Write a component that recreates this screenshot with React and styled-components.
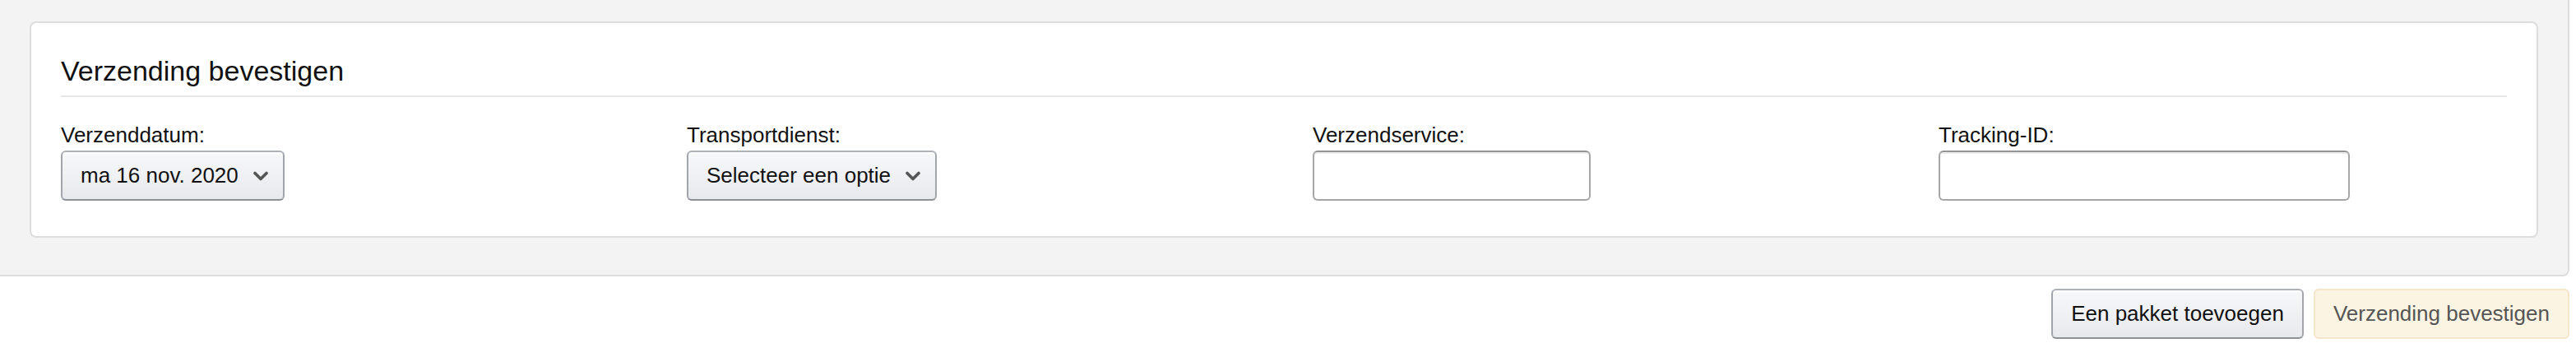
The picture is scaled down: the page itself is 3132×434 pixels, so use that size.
import styled, { createGlobalStyle } from "styled-components";

const GlobalStyle = createGlobalStyle`
  html, body {
    margin: 0;
    padding: 0;
    background: #ffffff;
  }
  body {
    font-family: "Liberation Sans", Arial, sans-serif;
    color: #111111;
  }
  * {
    box-sizing: border-box;
  }
`;

const Page = styled.div`
  width: 3124px;
`;

const Panel = styled.section`
  background: #f3f3f3;
  border-right: 2px solid #dddddd;
  border-bottom: 2px solid #dddddd;
  border-bottom-right-radius: 8px;
  padding: 26px 36px 45px 36px;
`;

const Card = styled.div`
  background: #ffffff;
  border: 2px solid #dddddd;
  border-radius: 8px;
  padding: 34px 36px 43px 36px;
`;

const Heading = styled.h2`
  margin: 0;
  font-size: 34px;
  line-height: 48px;
  font-weight: 400;
  color: #111111;
  padding-bottom: 6px;
  border-bottom: 2px solid #e7e7e7;
`;

const Fields = styled.div`
  display: grid;
  grid-template-columns: repeat(4, 1fr);
  column-gap: 70px;
  margin-top: 27px;
`;

const Field = styled.div`
  display: flex;
  flex-direction: column;
  align-items: flex-start;
`;

const Label = styled.label`
  font-size: 26px;
  line-height: 38px;
  color: #111111;
`;

const Select = styled.button`
  display: flex;
  align-items: center;
  gap: 18px;
  height: 61px;
  padding: 0 18px 0 22px;
  font-family: inherit;
  font-size: 26px;
  color: #111111;
  background: linear-gradient(to bottom, #f7f8fa, #e7e9ec);
  border: 2px solid #adb1b8;
  border-color: #adb1b8 #a2a6ac #8d9096;
  border-radius: 6px;
  box-shadow: inset 0 2px 0 rgba(255, 255, 255, 0.6);
`;

const TextInput = styled.input`
  width: ${(props) => props.$width}px;
  height: 61px;
  padding: 0 14px;
  font-family: inherit;
  font-size: 26px;
  background: #ffffff;
  border: 2px solid #a6a6a6;
  border-top-color: #949494;
  border-radius: 6px;
  box-shadow: inset 0 2px 0 rgba(0, 0, 0, 0.07);
  outline: none;
`;

const Actions = styled.div`
  display: flex;
  justify-content: flex-end;
  gap: 12px;
  margin-top: 15px;
`;

const ActionButton = styled.button`
  height: 61px;
  padding: 0 22px;
  font-family: inherit;
  font-size: 26px;
  border-radius: 6px;
  border: 2px solid;
  color: ${(props) => (props.$disabled ? "#555555" : "#111111")};
  background: ${(props) =>
    props.$disabled
      ? "#fcf4e3"
      : "linear-gradient(to bottom, #f7f8fa, #e7e9ec)"};
  border-color: ${(props) =>
    props.$disabled ? "#f3e6c9" : "#adb1b8 #a2a6ac #8d9096"};
  box-shadow: ${(props) =>
    props.$disabled ? "none" : "inset 0 2px 0 rgba(255, 255, 255, 0.6)"};
`;

const Chevron = () => (
  <svg width="18" height="12" viewBox="0 0 18 12" fill="none">
    <path
      d="M2 2.5 L9 9.5 L16 2.5"
      stroke="#555555"
      strokeWidth="3.6"
      strokeLinecap="round"
      strokeLinejoin="round"
    />
  </svg>
);

export default function App() {
  return (
    <Page>
      <GlobalStyle />
      <Panel>
        <Card>
          <Heading>Verzending bevestigen</Heading>
          <Fields>
            <Field>
              <Label>Verzenddatum:</Label>
              <Select>
                ma 16 nov. 2020
                <Chevron />
              </Select>
            </Field>
            <Field>
              <Label>Transportdienst:</Label>
              <Select>
                Selecteer een optie
                <Chevron />
              </Select>
            </Field>
            <Field>
              <Label>Verzendservice:</Label>
              <TextInput $width={338} />
            </Field>
            <Field>
              <Label>Tracking-ID:</Label>
              <TextInput $width={500} />
            </Field>
          </Fields>
        </Card>
      </Panel>
      <Actions>
        <ActionButton>Een pakket toevoegen</ActionButton>
        <ActionButton $disabled>Verzending bevestigen</ActionButton>
      </Actions>
    </Page>
  );
}
